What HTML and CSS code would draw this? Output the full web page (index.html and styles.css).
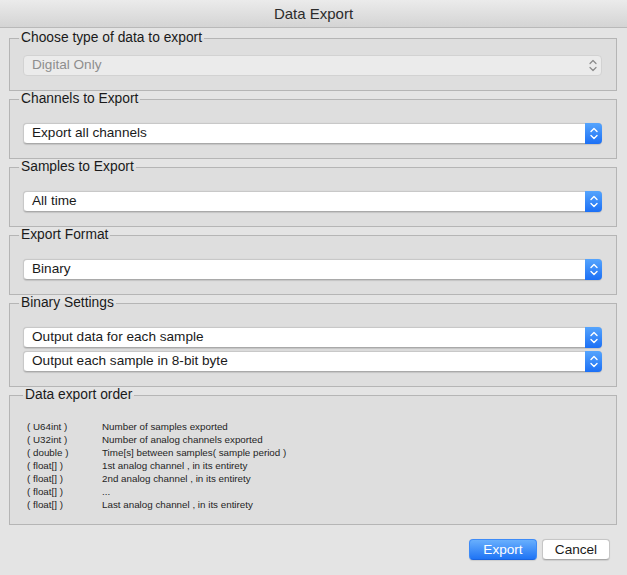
FILE: index.html
```html
<!DOCTYPE html>
<html>
<head>
<meta charset="utf-8">
<title>Data Export</title>
<link rel="stylesheet" href="styles.css">
</head>
<body>
<div class="window">
  <div class="titlebar">Data Export</div>
  <div class="content">
    <fieldset class="group first">
      <legend>Choose type of data to export</legend>
      <div class="select disabled">
        <span class="label">Digital Only</span>
        <span class="stepper"><svg width="16" height="19" viewBox="0 0 16 19"><path d="M5 7.5 L8 4.5 L11 7.5"/><path d="M5 11.5 L8 14.5 L11 11.5"/></svg></span>
      </div>
    </fieldset>
    <fieldset class="group">
      <legend>Channels to Export</legend>
      <div class="select">
        <span class="label">Export all channels</span>
        <span class="stepper"><svg width="16" height="21" viewBox="0 0 16 21"><path d="M5 8.5 L8 5.5 L11 8.5"/><path d="M5 12.5 L8 15.5 L11 12.5"/></svg></span>
      </div>
    </fieldset>
    <fieldset class="group">
      <legend>Samples to Export</legend>
      <div class="select">
        <span class="label">All time</span>
        <span class="stepper"><svg width="16" height="21" viewBox="0 0 16 21"><path d="M5 8.5 L8 5.5 L11 8.5"/><path d="M5 12.5 L8 15.5 L11 12.5"/></svg></span>
      </div>
    </fieldset>
    <fieldset class="group">
      <legend>Export Format</legend>
      <div class="select">
        <span class="label">Binary</span>
        <span class="stepper"><svg width="16" height="21" viewBox="0 0 16 21"><path d="M5 8.5 L8 5.5 L11 8.5"/><path d="M5 12.5 L8 15.5 L11 12.5"/></svg></span>
      </div>
    </fieldset>
    <fieldset class="group stack">
      <legend>Binary Settings</legend>
      <div class="select">
        <span class="label">Output data for each sample</span>
        <span class="stepper"><svg width="16" height="21" viewBox="0 0 16 21"><path d="M5 8.5 L8 5.5 L11 8.5"/><path d="M5 12.5 L8 15.5 L11 12.5"/></svg></span>
      </div>
      <div class="select">
        <span class="label">Output each sample in 8-bit byte</span>
        <span class="stepper"><svg width="16" height="21" viewBox="0 0 16 21"><path d="M5 8.5 L8 5.5 L11 8.5"/><path d="M5 12.5 L8 15.5 L11 12.5"/></svg></span>
      </div>
    </fieldset>
    <fieldset class="group order">
      <legend>Data export order</legend>
      <div class="order-list">
        <span>( U64int )</span><span>Number of samples exported</span>
        <span>( U32int )</span><span>Number of analog channels exported</span>
        <span>( double )</span><span>Time[s] between samples( sample period )</span>
        <span>( float[] )</span><span>1st analog channel , in its entirety</span>
        <span>( float[] )</span><span>2nd analog channel , in its entirety</span>
        <span>( float[] )</span><span>...</span>
        <span>( float[] )</span><span>Last analog channel , in its entirety</span>
      </div>
    </fieldset>
    <div class="buttons">
      <button class="btn primary">Export</button>
      <button class="btn">Cancel</button>
    </div>
  </div>
</div>
</body>
</html>
```

FILE: styles.css
```css
* { box-sizing: border-box; }
html, body {
  margin: 0;
  padding: 0;
}
body {
  width: 627px;
  height: 575px;
  background: #e4e4e4;
  font-family: "Liberation Sans", Arial, sans-serif;
  color: #1e1e1e;
  overflow: hidden;
}
.window {
  width: 627px;
  height: 575px;
  background: #e4e4e4;
}
.titlebar {
  height: 28px;
  background: linear-gradient(#ebebeb, #d4d4d4);
  border-bottom: 1px solid #b9b9b9;
  font-size: 15px;
  line-height: 27px;
  text-align: center;
  color: #2c2c2c;
}
.content {
  padding: 2px 10px 0 9px;
  display: flex;
  flex-direction: column;
}
.group {
  margin: 0;
  min-width: 0;
  border: 1px solid #b5b5b5;
  background: #dedede;
  padding: 16px 14px 14px 13px;
}
.group.first { padding-top: 9px; }
.group legend {
  font-size: 13.8px;
  line-height: 16px;
  padding: 0 2px;
  margin-left: -4px;
  color: #1a1a1a;
}
.group.stack {
  display: flex;
  flex-direction: column;
  gap: 3px;
}
.select {
  height: 21px;
  display: flex;
  align-items: stretch;
  background: #ffffff;
  border: 1px solid #c8c8c8;
  border-bottom-color: #a9a9a9;
  border-radius: 4px;
  box-shadow: 0 0.5px 1px rgba(0, 0, 0, 0.12);
}
.select .label {
  flex: 1;
  padding-left: 8px;
  font-size: 13.6px;
  line-height: 18px;
  color: #1a1a1a;
}
.select .stepper {
  width: 17px;
  margin: -1px -1px -1px 0;
  border-radius: 0 4px 4px 0;
  background: linear-gradient(#55a4fd, #1c70f5);
  display: flex;
  align-items: center;
  justify-content: center;
}
.select .stepper svg path {
  fill: none;
  stroke: #ffffff;
  stroke-width: 1.4;
  stroke-linecap: round;
  stroke-linejoin: round;
}
.select.disabled {
  background: #ebebeb;
  border-color: #d2d2d2;
  box-shadow: none;
}
.select.disabled .label { color: #8e8e8e; }
.select.disabled .stepper {
  background: none;
  margin: 0;
}
.select.disabled .stepper svg path { stroke: #8a8a8a; stroke-width: 1.2; }
.group.order {
  padding: 17px 14px 13px 17px;
}
.order-list {
  display: grid;
  grid-template-columns: 75px 1fr;
  font-size: 9.8px;
  line-height: 13px;
  color: #1e1e1e;
}
.buttons {
  display: flex;
  justify-content: flex-end;
  gap: 5px;
  padding-right: 7px;
  margin-top: 14px;
}
.btn {
  width: 68px;
  height: 21px;
  padding: 0;
  font-family: "Liberation Sans", Arial, sans-serif;
  font-size: 13.6px;
  line-height: 19px;
  border-radius: 4px;
  background: #ffffff;
  border: 1px solid #c6c6c6;
  border-bottom-color: #a8a8a8;
  color: #1a1a1a;
  box-shadow: 0 0.5px 1px rgba(0, 0, 0, 0.1);
}
.btn.primary {
  background: linear-gradient(#68affd, #1f74f5);
  border-color: #3e8bf7;
  border-bottom-color: #1a65e0;
  color: #ffffff;
}
```
